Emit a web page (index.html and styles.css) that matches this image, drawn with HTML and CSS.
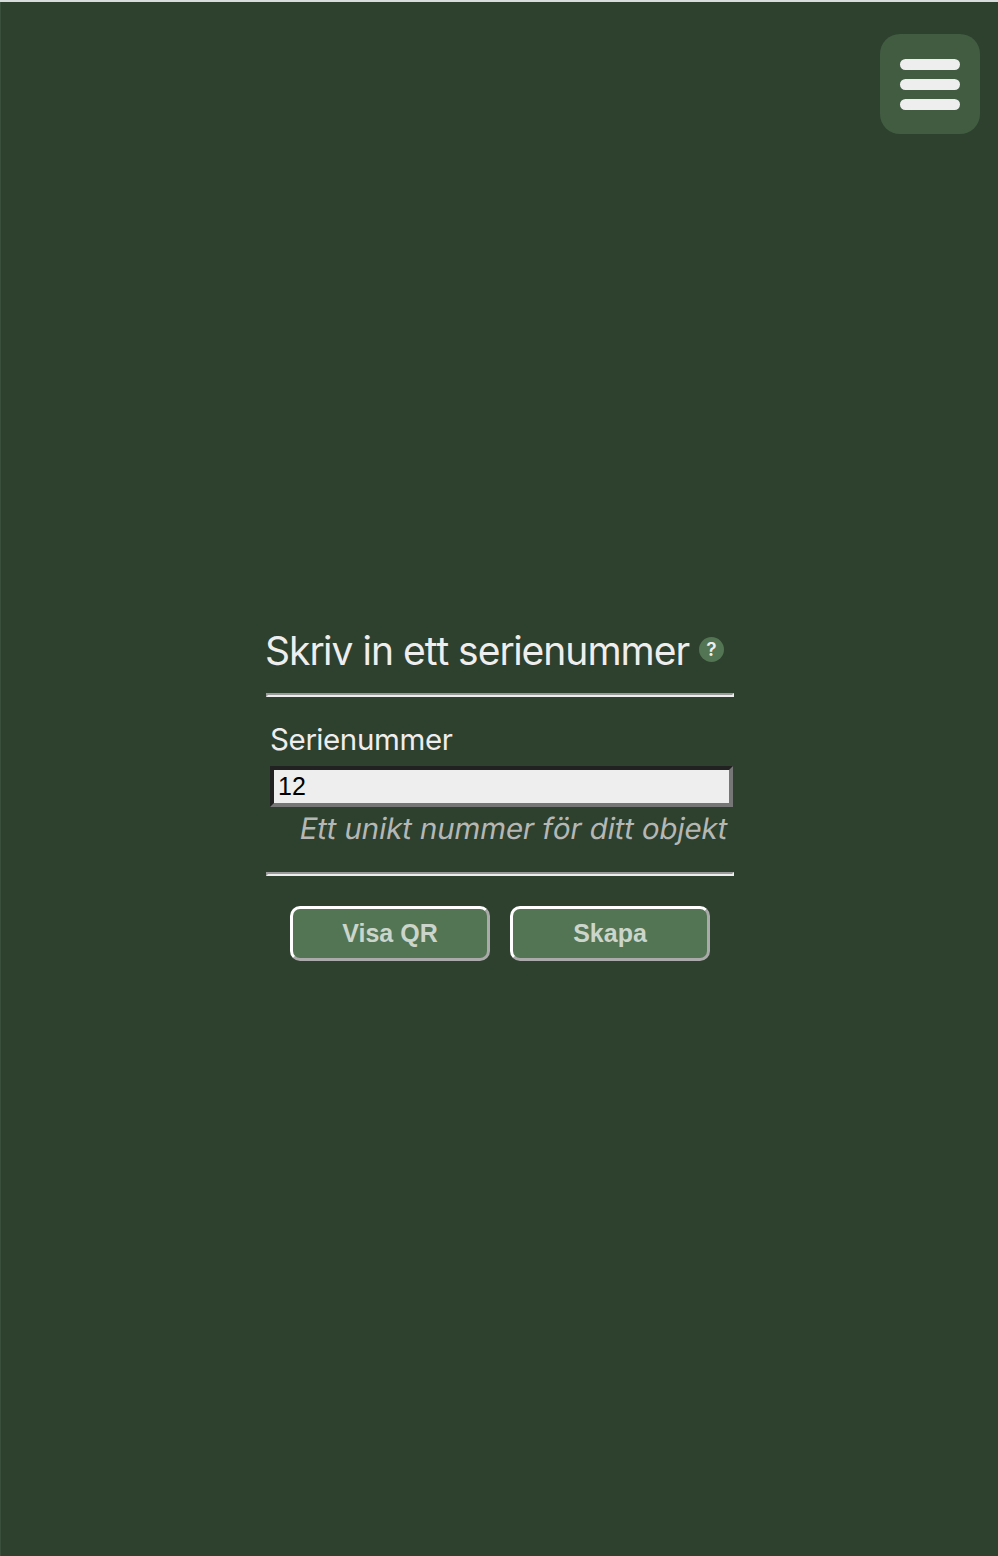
FILE: index.html
```html
<!DOCTYPE html>
<html lang="sv">
<head>
<meta charset="utf-8">
<title>Serienummer</title>
<link rel="stylesheet" href="styles.css">
</head>
<body>
<header class="topbar">
  <button class="menu" type="button" aria-label="Meny">
    <span class="bar"></span><span class="bar"></span><span class="bar"></span>
  </button>
</header>
<main class="panel">
  <div class="heading">
    <h1 class="title">Skriv in ett serienummer</h1>
    <span class="help">?</span>
  </div>
  <hr class="rule">
  <div class="field">
    <label class="label" for="serial">Serienummer</label>
    <input class="input" id="serial" type="text" value="12">
    <p class="hint">Ett unikt nummer för ditt objekt</p>
  </div>
  <hr class="rule">
  <div class="actions">
    <button class="action" type="button">Visa QR</button>
    <button class="action" type="button">Skapa</button>
  </div>
</main>
</body>
</html>
```

FILE: styles.css
```css
* { box-sizing: border-box; }
body {
  margin: 0;
  height: 1556px;
  overflow: hidden;
  background: linear-gradient(90deg, #3b4f3d 1px, #2e402e 1px);
  border-top: 2px solid #d9dcdd;
  color: #eee;
  font-family: Inter, sans-serif;
  font-kerning: none;
}
.topbar {
  display: flex;
  justify-content: flex-end;
  padding: 32px 18px 0 0;
}
.menu {
  display: flex;
  flex-direction: column;
  gap: 9px;
  width: 100px;
  height: 100px;
  padding: 25px 20px 24px;
  border: 0;
  border-radius: 20px;
  background: #415c41;
}
.bar {
  width: 60px;
  height: 11px;
  border-radius: 5.5px;
  background: #eee;
}
.panel {
  width: 468px;
  margin: 490px 0 0 266px;
}
.heading {
  display: flex;
  height: 69px;
}
.title {
  margin: 0 0 0 -1px;
  width: 434px;
  font-size: 39px;
  font-weight: 400;
  line-height: 54px;
  letter-spacing: -1px;
  white-space: nowrap;
}
.help {
  width: 25px;
  height: 25px;
  margin-top: 13px;
  border-radius: 50%;
  background: #537553;
  font-size: 19px;
  font-weight: 600;
  line-height: 25px;
  text-align: center;
}
.rule {
  height: 4px;
  margin: 0;
  border: 2px solid;
  border-color: #9a9a9a #eee #eee #9a9a9a;
}
.field {
  height: 175px;
  padding: 23px 1px 0 4px;
}
.label {
  display: block;
  height: 46px;
  font-size: 29.5px;
  line-height: 38px;
  letter-spacing: -0.35px;
}
.input {
  display: block;
  width: 463px;
  height: 41px;
  padding: 0 4px;
  border: 4px solid;
  border-color: #212121 #767676 #767676 #212121;
  border-radius: 0;
  background: #eee;
  color: #000;
  font: 25px "Liberation Sans", Arial, sans-serif;
}
.hint {
  margin: 0;
  padding-left: 30px;
  color: #b5b7b5;
  font-size: 29.5px;
  line-height: 43px;
  letter-spacing: -0.12px;
  white-space: nowrap;
  transform: skewX(-10deg);
}
.actions {
  display: flex;
  justify-content: center;
  gap: 20px;
  padding-top: 30px;
}
.action {
  width: 200px;
  height: 55px;
  padding: 0;
  border: 3px solid;
  border-color: #fff #aaa #aaa #fff;
  border-radius: 10px;
  background: #537553;
  color: #cbd5cb;
  font: bold 25px "Liberation Sans", Arial, sans-serif;
}
```
